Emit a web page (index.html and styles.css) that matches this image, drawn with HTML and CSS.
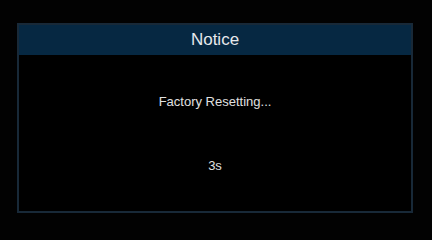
FILE: index.html
```html
<!DOCTYPE html>
<html>
<head>
<meta charset="utf-8">
<link rel="stylesheet" href="styles.css">
</head>
<body>
<div class="screen">
  <div class="dialog">
    <div class="header">Notice</div>
    <div class="content">
      <div class="message">Factory Resetting...</div>
      <div class="countdown">3s</div>
    </div>
  </div>
</div>
</body>
</html>
```
FILE: styles.css
```css
html, body {
  margin: 0;
  padding: 0;
  background: #020202;
}
.screen {
  width: 432px;
  height: 236px;
  padding: 23px 0 0 17px;
  box-sizing: border-box;
}
.dialog {
  width: 396px;
  height: 190px;
  box-sizing: border-box;
  border: 2px solid #182938;
  background: #000;
  display: flex;
  flex-direction: column;
  font-family: "Liberation Sans", Arial, sans-serif;
}
.header {
  height: 30px;
  background: #062842;
  color: #e6e9ec;
  font-size: 17px;
  display: flex;
  align-items: center;
  justify-content: center;
}
.content {
  flex: 1;
  display: flex;
  flex-direction: column;
  align-items: center;
  color: #e0e0e0;
  font-size: 13px;
  line-height: 15px;
}
.message {
  margin-top: 39px;
}
.countdown {
  margin-top: 49px;
}
```
